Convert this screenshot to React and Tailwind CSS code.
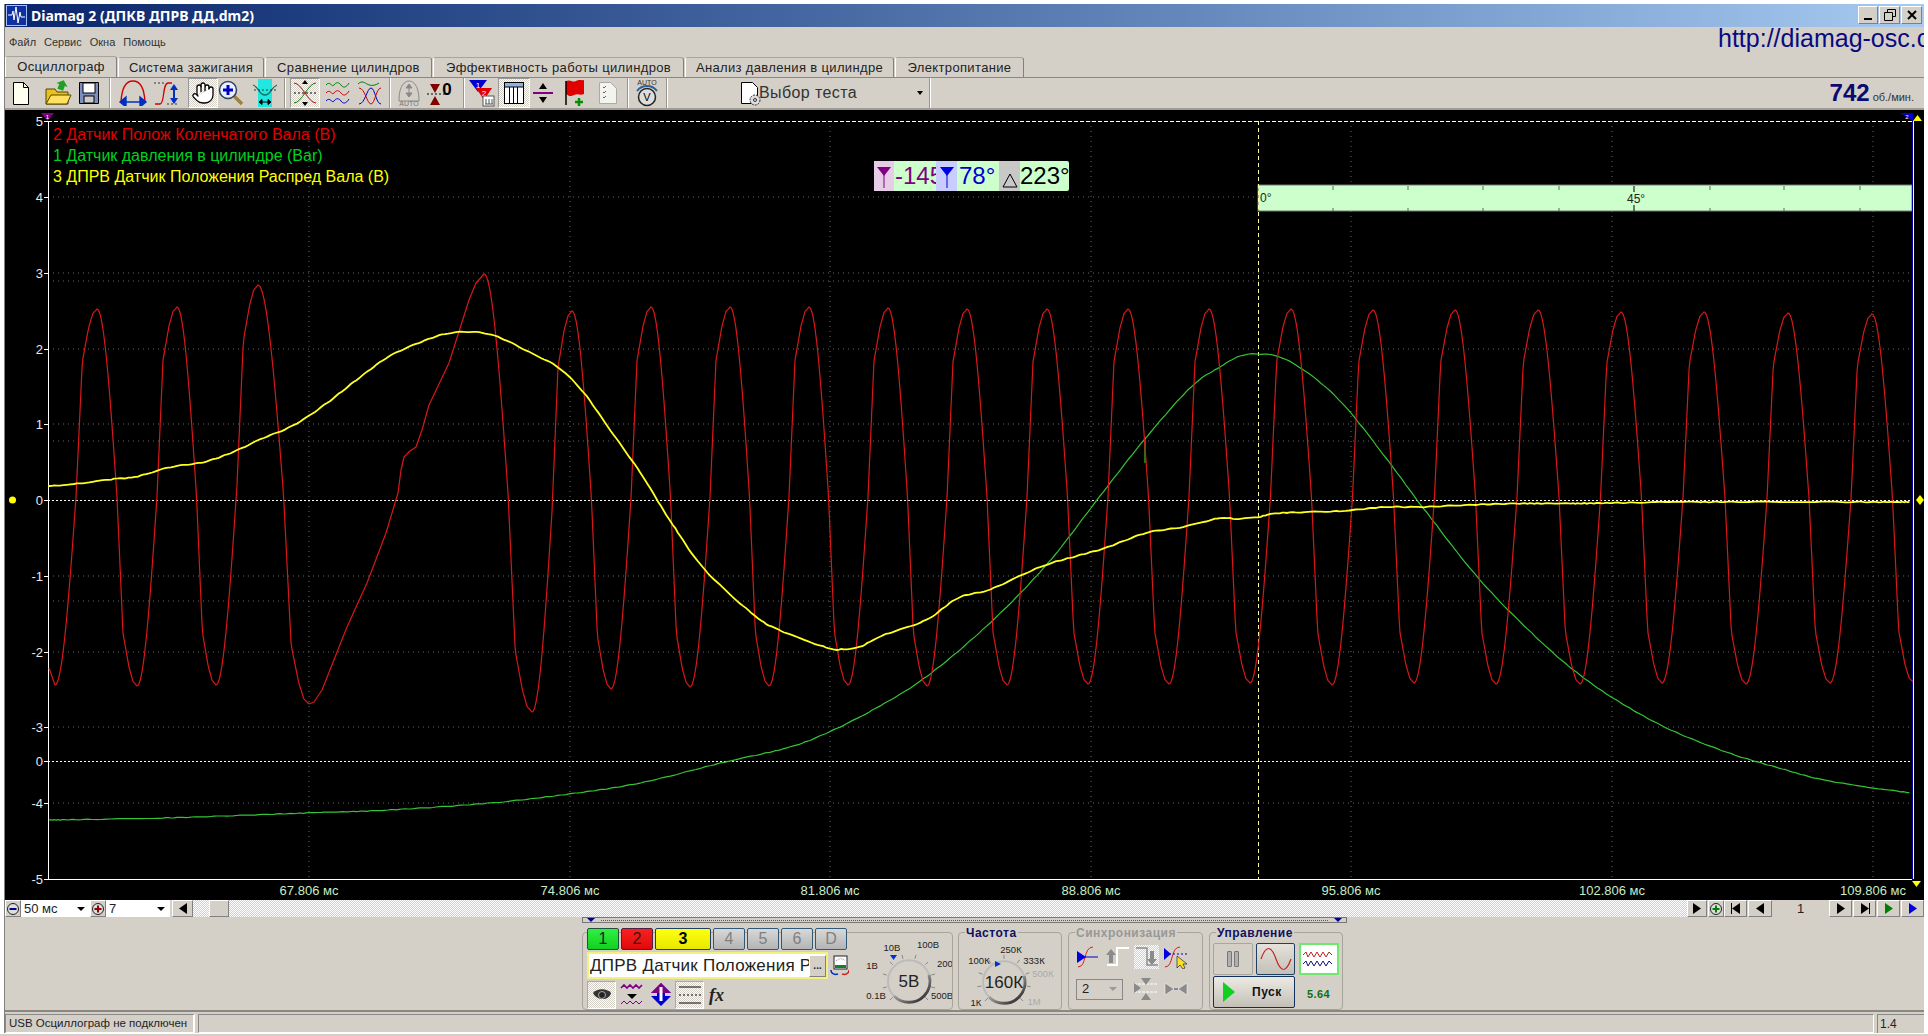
import React from "react";
import { Hand } from "lucide-react";

const face = "bg-[#d4d0c8]";
const raised = "border border-t-white border-l-white border-r-[#808080] border-b-[#808080]";
const dither = "bg-[repeating-conic-gradient(#ffffff_0_25%,#d4d0c8_0_50%)] bg-[length:2px_2px]";

// extremes of the crank sensor trace, read off the screen (x, y)
const redExtremes = [
  [55, 685], [97, 309], [137, 686], [177, 307], [216, 685], [258, 285], [309, 704],
];
const redExtremes2 = [
  [484, 274], [532, 712], [572, 311], [611, 689], [651, 307], [690, 687], [730, 307], [769, 686],
  [809, 307], [848, 685], [888, 308], [927, 686], [967, 309], [1007, 685], [1047, 309], [1088, 684],
  [1128, 309], [1169, 684], [1209, 309], [1250, 683], [1291, 309], [1332, 685], [1373, 310], [1414, 683],
  [1455, 310], [1496, 684], [1538, 310], [1580, 684], [1621, 312], [1662, 683], [1704, 312], [1746, 684],
  [1788, 313], [1830, 683], [1872, 314], [1913, 682],
];
const redBump = [
  [309, 704], [314, 702], [322, 690], [347, 627], [367, 583], [386, 533], [398, 493], [401, 470],
  [404, 457], [410, 451], [416, 447], [422, 430], [429, 405], [449, 363], [469, 300], [476, 283], [484, 274],
];
const yellowPts = [
  [48, 486], [74, 484], [114, 479], [135, 477], [171, 467], [204, 462], [233, 452], [261, 439], [294, 425],
  [327, 403], [359, 378], [388, 357], [416, 344], [445, 334], [473, 332], [498, 337], [531, 353], [559, 368],
  [584, 393], [608, 427], [640, 472], [656, 498], [673, 525], [705, 570], [754, 615], [779, 630], [828, 648],
  [844, 649], [860, 647], [881, 636], [926, 620], [958, 598], [991, 589], [1040, 567], [1073, 557], [1105, 548],
  [1146, 533], [1183, 527], [1220, 518], [1236, 519], [1258, 517], [1280, 513], [1342, 511], [1384, 507],
  [1421, 507], [1467, 505], [1517, 503.5], [1571, 503.5], [1696, 502], [1911, 502],
];
const greenPts = [
  [49, 820], [163, 818], [306, 813], [388, 810], [490, 803], [569, 794], [640, 783], [725, 762], [783, 749],
  [820, 736], [869, 712], [926, 677], [991, 622], [1048, 563], [1097, 500], [1144, 440], [1191, 387], [1220, 367],
  [1240, 356], [1258, 354], [1280, 357], [1305, 371], [1330, 391], [1355, 418], [1392, 466], [1424, 509],
  [1480, 580], [1538, 639], [1580, 675], [1621, 703], [1671, 730], [1729, 753], [1779, 768], [1829, 781], [1911, 793],
];

// half wave: sine first, then the kink every tooth of the sensor shows
const halfWave = (t) => {
  if (t < 0.5) return 0.5 - 0.5 * Math.cos(Math.PI * t);
  const table = [[0.5, 0.5], [0.65, 0.86], [0.8, 0.95], [0.9, 0.988], [1, 1]];
  for (let i = 1; i < table.length; i++) {
    if (t <= table[i][0]) {
      const k = (t - table[i - 1][0]) / (table[i][0] - table[i - 1][0]);
      return table[i - 1][1] + k * (table[i][1] - table[i - 1][1]);
    }
  }
  return 1;
};

const toothPath = (list) => {
  const out = [];
  for (let i = 1; i < list.length; i++) {
    const [x0, y0] = list[i - 1];
    const [x1, y1] = list[i];
    for (let x = x0; x < x1; x += 1) {
      out.push(`${x},${(y0 + (y1 - y0) * halfWave((x - x0) / (x1 - x0))).toFixed(1)}`);
    }
  }
  out.push(list[list.length - 1].join(","));
  return out.join(" ");
};

// catmull-rom through the points, with a little jitter for the noisy channels
const smoothPath = (pts, noise) => {
  const out = [];
  for (let i = 0; i < pts.length - 1; i++) {
    const p0 = pts[Math.max(i - 1, 0)];
    const p1 = pts[i];
    const p2 = pts[i + 1];
    const p3 = pts[Math.min(i + 2, pts.length - 1)];
    const steps = Math.max(2, Math.round((p2[0] - p1[0]) / 3));
    for (let s = 0; s < steps; s++) {
      const t = s / steps;
      const f = (a, b, c, d) =>
        0.5 * (2 * b + (c - a) * t + (2 * a - 5 * b + 4 * c - d) * t * t + (3 * b - a - 3 * c + d) * t * t * t);
      const x = f(p0[0], p1[0], p2[0], p3[0]);
      const y = f(p0[1], p1[1], p2[1], p3[1]) + Math.sin(x * 1.7) * noise;
      out.push(`${x.toFixed(1)},${y.toFixed(1)}`);
    }
  }
  return out.join(" ");
};

const yLabels = [
  ["5", 121], ["4", 197], ["3", 273], ["2", 349], ["1", 424], ["0", 500], ["-1", 576], ["-2", 652], ["-3", 727], ["0", 761], ["-4", 803], ["-5", 879],
];
const gridY = [197, 273, 281, 349, 424, 441, 576, 601, 652, 727, 803];
const gridX = [309, 570, 830, 1091, 1351, 1612, 1873];
const timeLabels = ["67.806 мс", "74.806 мс", "81.806 мс", "88.806 мс", "95.806 мс", "102.806 мс", "109.806 мс"];
const bandTicks = [1333, 1408, 1483, 1559, 1710, 1784, 1860];

const Chart = () => (
  <div className="relative h-[790px] w-full bg-black">
    <svg className="block" width="1919" height="790" viewBox="5 110 1919 790" fontFamily="Liberation Sans, Arial, sans-serif">
      {gridY.map((y) => (
        <line key={y} x1="48" x2="1912" y1={y} y2={y} stroke="#666" strokeDasharray="1 4" />
      ))}
      {gridX.map((x) => (
        <line key={x} x1={x} x2={x} y1="121" y2="879" stroke="#666" strokeDasharray="1 4" />
      ))}
      <rect x="1258" y="185" width="654" height="26" fill="#ccffcc" stroke="#777" />
      {bandTicks.map((x) => (
        <g key={x} stroke="#666">
          <line x1={x} x2={x} y1="186" y2="190" />
          <line x1={x} x2={x} y1="208" y2="211" />
        </g>
      ))}
      <line x1="1634" x2="1634" y1="186" y2="192" stroke="#000" />
      <line x1="1634" x2="1634" y1="205" y2="211" stroke="#000" />
      <text x="1260" y="202" fontSize="12" fill="#222">0°</text>
      <text x="1627" y="203" fontSize="12" fill="#222">45°</text>

      <line x1="48" x2="1912" y1="121.5" y2="121.5" stroke="#fff" strokeDasharray="4 2" />
      <line x1="48" x2="1912" y1="500.5" y2="500.5" stroke="#fff" strokeDasharray="2 2" />
      <line x1="48" x2="1912" y1="761.5" y2="761.5" stroke="#fff" strokeDasharray="2 2" />
      <line x1="1258.5" x2="1258.5" y1="121" y2="879" stroke="#ffffa0" strokeDasharray="4 3" />
      <line x1="48.5" x2="48.5" y1="121" y2="879" stroke="#fff" />
      <line x1="48" x2="1912" y1="879.5" y2="879.5" stroke="#fff" />
      <line x1="1912.5" x2="1912.5" y1="121" y2="879" stroke="#0000b0" />
      <line x1="1913.5" x2="1913.5" y1="121" y2="879" stroke="#fff" />

      {yLabels.map(([t, y], i) => (
        <g key={i}>
          <line x1="44" x2="48" y1={y + 0.5} y2={y + 0.5} stroke="#fff" />
          <text x="43" y={y + 5} fontSize="13" fill="#e8e8e8" textAnchor="end">{t}</text>
        </g>
      ))}
      {timeLabels.map((t, i) => (
        <text key={t} x={gridX[i]} y="895" fontSize="13" fill="#c8ecc8" textAnchor="middle">{t}</text>
      ))}

      <polyline points={smoothPath(greenPts, 0.25)} fill="none" stroke="#35c435" strokeWidth="1.2" />
      <line x1="1145" x2="1145" y1="438" y2="463" stroke="#35c435" strokeWidth="1.2" />
      <polyline points={`49,668 ${toothPath(redExtremes)}`} fill="none" stroke="#d81818" strokeWidth="1.2" />
      <polyline points={redBump.map((p) => p.join(",")).join(" ")} fill="none" stroke="#d81818" strokeWidth="1.2" strokeLinejoin="round" />
      <polyline points={toothPath(redExtremes2)} fill="none" stroke="#d81818" strokeWidth="1.2" />
      <polyline points={smoothPath(yellowPts, 0.35)} fill="none" stroke="#ffff20" strokeWidth="1.8" />

      <path d="M41 113h13l-6.5 8z" fill="#800080" />
      <text x="47.5" y="119" fontSize="6" fill="#fff" textAnchor="middle">1</text>
      <path d="M1900 113h13v8z" fill="#0000d0" />
      <text x="1907" y="119" fontSize="6" fill="#fff" textAnchor="middle">2</text>
      <path d="M1913 121l4.5-6 4.5 6z" fill="#ffff00" />
      <path d="M1912 881h9l-4.5 6z" fill="#ffff00" />
      <circle cx="12.5" cy="500" r="3.5" fill="#ffff00" />
      <path d="M1920 495l4 5-4 5-4-5z" fill="#ffff00" />
    </svg>

    <div className="absolute left-[48px] top-[15px] flex flex-col gap-[1px] font-['Liberation_Sans',Arial,sans-serif] text-[16px] leading-[20px]">
      <span className="text-[#e00000]">2 Датчик Полож Коленчатого Вала (В)</span>
      <span className="text-[#00d020]">1 Датчик давления в цилиндре (Bar)</span>
      <span className="text-[#ffff00]">3 ДПРВ Датчик Положения Распред Вала (В)</span>
    </div>

    <div className="absolute left-[869px] top-[51px] flex h-[30px] font-['Liberation_Sans',Arial,sans-serif] text-[24px] leading-[30px]">
      <div className="flex w-[20px] items-center justify-center bg-[#e6cce6]">
        <svg width="16" height="24"><path d="M1 3h14L8 12z" fill="#800080" /><path d="M8 10v14" stroke="#800080" /></svg>
      </div>
      <div className="w-[42px] overflow-hidden whitespace-nowrap bg-[#ccffcc] pl-[1px] text-[#800080]">-145°</div>
      <div className="flex w-[21px] items-center justify-center bg-[#c8ccff]">
        <svg width="16" height="24"><path d="M1 3h14L8 12z" fill="#0000e0" /><path d="M8 10v14" stroke="#0000e0" /></svg>
      </div>
      <div className="w-[42px] bg-[#ccffcc] pl-[2px] text-[#0000d0]">78°</div>
      <div className="flex w-[21px] items-end justify-center bg-[#c8c8c8] pb-[3px]">
        <svg width="16" height="16"><path d="M8 2L15 15H1z" fill="none" stroke="#000" /></svg>
      </div>
      <div className="w-[49px] rounded-r-[2px] bg-[#ccffcc] text-black">223°</div>
    </div>
  </div>
);

const Tab = ({ w, active, children }) => (
  <div
    className={`flex items-center justify-center rounded-t-[3px] border border-b-0 border-l-white border-t-[#a8a49c] border-r-[#808080] text-[13px] tracking-[0.35px] text-[#222] ${w} ${
      active ? "-mt-[1px] h-[21px]" : "mt-0 h-[20px]"
    }`}
  >
    {children}
  </div>
);

const Sep = ({ cls }) => <div className={`h-[30px] w-[2px] border-l border-r border-l-[#9a968e] border-r-white ${cls}`} />;

const Tool = ({ cls, pressed, children }) => (
  <div className={`flex h-[30px] items-center justify-center ${cls} ${pressed ? `${dither} border border-b-white border-r-white border-l-[#999] border-t-[#999]` : ""}`}>
    {children}
  </div>
);

const Toolbar = () => (
  <div className="flex h-[33px] items-center border-b-2 border-t border-b-[#a09c94] border-t-[#8c8880] pl-[5px]">
    <Tool cls="w-[22px]"><svg width="18" height="25"><path d="M1.5 1.5h10l5 5v17h-15z" fill="#fffff0" stroke="#000" /><path d="M11.5 1.5v5h5" fill="none" stroke="#000" /></svg></Tool>
    <Tool cls="ml-[11px] w-[30px]"><svg width="28" height="26"><path d="M2 9h9l2 3h11v12H2z" fill="#e8c020" stroke="#554400" /><path d="M2 24l5-9h20l-4 9z" fill="#ffe060" stroke="#554400" /><path d="M15 10V5h-3l6-5 6 5h-3v5z" fill="#20a020" transform="rotate(20 18 5)" /></svg></Tool>
    <Tool cls="ml-[3px] w-[26px]"><svg width="22" height="24"><path d="M1.5 1.5h19v21h-19z" fill="#7c90c0" stroke="#000" /><rect x="5" y="2" width="12" height="10" fill="#fff" stroke="#000" /><rect x="6" y="15" width="10" height="7" fill="#ccc" stroke="#000" /></svg></Tool>
    <Sep cls="ml-[7px]" />
    <Tool cls="ml-[3px] w-[38px]"><svg width="30" height="26"><path d="M3 22C4 4 10 1 15 1s11 3 12 21" fill="none" stroke="#d00000" strokeWidth="1.4" /><path d="M2 22h26M2 22l6-5v10zM28 22l-6-5v10z" fill="#0030c0" stroke="#0030c0" strokeWidth="1.4" /></svg></Tool>
    <Tool cls="ml-[0px] w-[30px]"><svg width="28" height="26"><path d="M2 24h5c5 0 2-20 8-21h4" fill="none" stroke="#d00000" strokeWidth="1.3" /><path d="M1 3h12M14 24h12" stroke="#333" strokeDasharray="2 2" /><path d="M21 4l-4 6h3v8h-3l4 6 4-6h-3v-8h3z" fill="#0030c0" /></svg></Tool>
    <Tool cls="ml-[6px] w-[30px]" pressed><Hand size={24} strokeWidth={1.3} color="#000" fill="#fff" /></Tool>
    <Tool cls="ml-[0px] w-[26px]"><svg width="26" height="26"><path d="M15 15l9 9" stroke="#a08040" strokeWidth="3.5" /><circle cx="10" cy="10" r="8.5" fill="#e8f0ff" stroke="#304060" strokeWidth="1.5" /><path d="M10 5v10M5 10h10" stroke="#0000c0" strokeWidth="3" /></svg></Tool>
    <Tool cls="ml-[8px] w-[26px]"><svg width="26" height="28"><rect x="6" y="0" width="14" height="28" fill="#20e8e0" /><path d="M1 6c6 2 6 10 12 10s6-8 12-10" fill="none" stroke="#107060" strokeWidth="1.3" /><path d="M2 11h22" stroke="#333" strokeDasharray="2 2" /><path d="M7 23h12M7 23l3-2.5v5zM19 23l-3-2.5v5z" stroke="#000" fill="#000" /></svg></Tool>
    <Sep cls="ml-[6px]" />
    <Tool cls="ml-[4px] w-[30px]" pressed><svg width="26" height="26"><path d="M2 3c8 0 14 20 22 20" fill="none" stroke="#d00000" /><path d="M2 23c8 0 14-20 22-20" fill="none" stroke="#008000" /><path d="M2 13h22" stroke="#000" strokeDasharray="2 2" /><path d="M13 0l-3 4h6zM13 26l-3-4h6z" fill="#000" /></svg></Tool>
    <Tool cls="ml-[4px] w-[28px]"><svg width="26" height="26"><path d="M1 5c4-5 6 3 8 0s5-3 7 0 5 3 8-2" fill="none" stroke="#008000" /><path d="M1 13c4-5 6 3 8 0s5-3 7 0 5 3 8-2" fill="none" stroke="#d00000" /><path d="M1 21c4-5 6 3 8 0s5-3 7 0 5 3 8-2" fill="none" stroke="#0000c0" /></svg></Tool>
    <Tool cls="ml-[4px] w-[28px]"><svg width="26" height="26"><path d="M1 4c4-4 7-1 9 0s6 3 12-1" fill="none" stroke="#008000" /><path d="M2 24c6 0 8-16 12-16s5 16 10 16" fill="none" stroke="#0000c0" /><path d="M2 8c6 0 8 16 12 16s5-16 10-16" fill="none" stroke="#d00000" /></svg></Tool>
    <Sep cls="ml-[5px]" />
    <Tool cls="ml-[4px] w-[28px]"><svg width="26" height="28"><path d="M3 22C3 6 9 2 13 2s10 4 10 20z" fill="none" stroke="#888" /><path d="M13 5l-3 4h6zM13 18l-3-4h6zM13 9v5" fill="#888" stroke="#888" /><text x="13" y="27" fontSize="7" textAnchor="middle" fill="#777" fontFamily="Liberation Sans">AUTO</text></svg></Tool>
    <Tool cls="ml-[1px] w-[30px]"><svg width="28" height="26"><path d="M2 14h18" stroke="#000" strokeDasharray="2 2" /><path d="M5 4l5 9 5-9zM5 25l5-9 5 9z" fill="#800000" transform="translate(0 0)" /><text x="22" y="15" fontSize="17" fontWeight="bold" textAnchor="middle" fill="#000" fontFamily="Liberation Sans">0</text></svg></Tool>
    <Sep cls="ml-[9px]" />
    <Tool cls="ml-[2px] w-[30px]"><svg width="28" height="28"><path d="M1 1h18L10 13z" fill="#0000d0" /><text x="10" y="9" fontSize="8" fill="#fff" textAnchor="middle" fontFamily="Liberation Sans">1</text><path d="M8 9h16L16 21z" fill="#e00000" /><text x="16" y="17" fontSize="8" fill="#fff" textAnchor="middle" fontFamily="Liberation Sans">2</text><rect x="15" y="17" width="11" height="10" fill="#fff" stroke="#555" /><path d="M18 20v5M21 20v5M24 20v5M17 25h8" stroke="#555" /></svg></Tool>
    <Tool cls="ml-[1px] w-[32px]" pressed><svg width="24" height="24"><rect x="2.5" y="1.5" width="19" height="21" fill="#fff" stroke="#000" /><rect x="3" y="2" width="18" height="4" fill="#90b0e0" /><path d="M7.5 6v16M11.5 6v16M15.5 6v16M3 6h18" stroke="#000" /></svg></Tool>
    <Tool cls="ml-[0px] w-[26px]"><svg width="22" height="24"><path d="M11 2l-4 6h8zM11 22l-4-6h8z" fill="#000" /><path d="M1 12h20" stroke="#800080" strokeWidth="2" /></svg></Tool>
    <Tool cls="ml-[6px] w-[26px]"><svg width="24" height="28"><path d="M3 2c5-2 6 2 10 0s5 0 8-1v14c-4 2-6-1-10 1s-5 1-8-1z" fill="#e00000" /><path d="M3 2v24" stroke="#000" strokeWidth="1.5" /><path d="M16 19v8M12 23h8" stroke="#009000" strokeWidth="2.5" /></svg></Tool>
    <Tool cls="ml-[7px] w-[26px]"><svg width="20" height="24"><path d="M1.5 1.5h11l6 6v15h-17z" fill="#f4f4ee" stroke="#aaa" /><path d="M5 6l1 1 2-2M5 11l1 1 2-2M5 16l1 1 2-2" fill="none" stroke="#666" /></svg></Tool>
    <Sep cls="ml-[6px]" />
    <Tool cls="ml-[3px] w-[30px]"><svg width="26" height="28"><text x="13" y="6" fontSize="7" textAnchor="middle" fill="#333" fontFamily="Liberation Sans">AUTO</text><path d="M3 12c3-4 7-5 10-5s7 1 10 5" fill="none" stroke="#3060a0" strokeWidth="2" /><circle cx="13" cy="18" r="8.5" fill="#ddd" stroke="#222" strokeWidth="1.5" /><text x="13" y="22" fontSize="11" textAnchor="middle" fill="#000" fontFamily="Liberation Sans">V</text></svg></Tool>
    <Sep cls="ml-[4px]" />
    <div className="ml-[72px] flex w-[188px] items-center">
      <svg width="24" height="26"><path d="M1.5 2.5h11l5 5v16h-16z" fill="#fff" stroke="#000" /><circle cx="15" cy="20" r="5" fill="#ddd" stroke="#333" strokeDasharray="2 1" /><circle cx="15" cy="20" r="1.5" fill="none" stroke="#333" /></svg>
      <span className="ml-[-6px] pl-[1px] font-['Liberation_Sans',Arial,sans-serif] text-[16px] tracking-[0.4px] text-[#333]">Выбор теста</span>
      <span className="ml-auto mr-[5px] h-0 w-0 border-x-[3.5px] border-t-[4px] border-x-transparent border-t-black" />
    </div>
    <Sep cls="ml-[1px]" />
    <div className="ml-auto flex items-baseline pr-[10px] font-['Liberation_Sans',Arial,sans-serif]">
      <span className="text-[24px] font-bold leading-none text-[#0a0a70]">742</span>
      <span className="ml-[3px] text-[11px] text-[#333]">об./мин.</span>
    </div>
  </div>
);

const Tri = ({ dir = "r", color = "#000", bar }) => (
  <svg width="12" height="11">
    {dir === "r" ? <path d="M2 0l8 5.5-8 5.5z" fill={color} /> : <path d="M10 0L2 5.5l8 5.5z" fill={color} />}
    {bar && <path d={dir === "r" ? "M10.5 0v11" : "M1.5 0v11"} stroke={color} />}
  </svg>
);

const NavBtn = ({ w, children }) => (
  <div className={`flex h-[17px] items-center justify-center ${face} ${raised} ${w}`}>{children}</div>
);

const RoundBtn = ({ mark }) => (
  <div className={`flex h-[17px] w-[16px] items-center justify-center ${face} ${raised}`}>
    <svg width="14" height="14">
      <circle cx="7" cy="7" r="5.5" fill="#ddd" stroke="#222" />
      {mark === "minus" && <path d="M3.5 7h7" stroke="#000080" strokeWidth="2" />}
      {mark === "plus" && <path d="M3.5 7h7M7 3.5v7" stroke="#900000" strokeWidth="2" />}
      {mark === "green" && <path d="M3.5 7h7M7 3.5v7" stroke="#008000" strokeWidth="2" />}
    </svg>
  </div>
);

const ScrollRow = () => (
  <div className="flex h-[17px] items-stretch text-[13px]">
    <RoundBtn mark="minus" />
    <div className="flex w-[69px] items-center bg-white pl-[3px] pr-[5px]">
      <span>50 мс</span>
      <span className="ml-auto h-0 w-0 border-x-[4px] border-t-[4px] border-x-transparent border-t-black" />
    </div>
    <RoundBtn mark="plus" />
    <div className="flex w-[64px] items-center bg-white pl-[3px] pr-[5px]">
      <span>7</span>
      <span className="ml-auto h-0 w-0 border-x-[4px] border-t-[4px] border-x-transparent border-t-black" />
    </div>
    <div className="w-[2px]" />
    <NavBtn w="w-[21px]"><Tri dir="l" /></NavBtn>
    <div className={`w-[16px] ${dither}`} />
    <div className={`w-[20px] ${face} ${raised}`} />
    <div className={`flex-1 ${dither}`} />
    <NavBtn w="w-[20px]"><Tri /></NavBtn>
    <div className="w-[1px]" />
    <RoundBtn mark="green" />
    <NavBtn w="w-[23px]"><Tri dir="l" bar /></NavBtn>
    <div className="w-[1px]" />
    <NavBtn w="w-[24px]"><Tri dir="l" /></NavBtn>
    <div className="flex w-[57px] items-center justify-center text-[13px] text-[#222]">1</div>
    <NavBtn w="w-[23px]"><Tri /></NavBtn>
    <div className="w-[1px]" />
    <NavBtn w="w-[23px]"><Tri bar /></NavBtn>
    <div className="w-[1px]" />
    <NavBtn w="w-[23px]"><Tri color="#008000" /></NavBtn>
    <div className="w-[1px]" />
    <NavBtn w="w-[23px]"><Tri color="#0000e0" /></NavBtn>
  </div>
);

const chanBase = "flex h-[22px] items-center justify-center rounded-[2px] border text-[16px]";

const ChannelButtons = () => (
  <div className="flex gap-[2px]">
    <div className={`${chanBase} w-[32px] border-[#205040] bg-gradient-to-b from-[#30f040] to-[#10d020] text-[#222]`}>1</div>
    <div className={`${chanBase} w-[32px] border-[#502040] bg-gradient-to-b from-[#f82020] to-[#e00808] text-[#401010]`}>2</div>
    <div className={`${chanBase} w-[56px] border-[#204060] bg-gradient-to-b from-[#ffff10] to-[#e8e800] font-bold text-black`}>3</div>
    {["4", "5", "6", "D"].map((c) => (
      <div key={c} className={`${chanBase} w-[32px] border-[#305878] bg-gradient-to-b from-[#d8d8d8] to-[#b4b4b4] text-[#808080]`}>{c}</div>
    ))}
  </div>
);

const IconCell = ({ pressed, children }) => (
  <div className={`flex h-[28px] w-[29px] items-center justify-center ${pressed ? `${dither} border border-b-white border-r-white border-l-[#aaa] border-t-[#aaa]` : ""}`}>
    {children}
  </div>
);

const Knob = ({ w, cx, cy, labels, value, ticks, marker }) => (
  <svg width={w} height="80" fontFamily="Liberation Sans, Arial, sans-serif">
    <defs>
      <linearGradient id={`ring${cx}`} x1="0" x2="1" y1="0" y2="1">
        <stop offset="0" stopColor="#f4f4f4" />
        <stop offset="0.5" stopColor="#888" />
        <stop offset="1" stopColor="#111" />
      </linearGradient>
    </defs>
    {ticks.map((a) => {
      const r = (a * Math.PI) / 180;
      return (
        <line key={a} x1={cx + Math.cos(r) * 23} y1={cy + Math.sin(r) * 23} x2={cx + Math.cos(r) * 27} y2={cy + Math.sin(r) * 27} stroke="#888" />
      );
    })}
    <path d={`M${cx - 15} ${cy + 15}A21 21 0 1 1 ${cx + 15} ${cy + 15}`} fill="none" stroke="#bbb" strokeWidth="2" />
    <path d={`M${cx - 15} ${cy + 15}A21 21 0 0 0 ${cx + 15} ${cy + 15}A21 21 0 0 0 ${cx + 20} ${cy - 6}`} fill="none" stroke={`url(#ring${cx})`} strokeWidth="3" />
    <path d={marker} fill="#0030d0" />
    {labels.map(([t, x, y, c]) => (
      <text key={t} x={x} y={y} fontSize="9.5" textAnchor="middle" fill={c || "#222"}>{t}</text>
    ))}
    <text x={cx} y={cy + 6} fontSize="17" textAnchor="middle" fill="#222">{value}</text>
  </svg>
);

const voltTicks = [135, 165, 195, 225, 255, 285, 315, 345, 15, 45];
const freqTicks = [135, 170, 200, 235, 270, 305, 340, 10, 45];

const GroupTitle = ({ color, children }) => (
  <span className={`absolute -top-[7px] left-[6px] bg-[#d4d0c8] px-[1px] font-['Liberation_Sans',Arial,sans-serif] text-[12px] font-bold leading-[14px] tracking-[0.5px] ${color}`}>{children}</span>
);

const frame = "relative h-[78px] rounded-[4px] border border-[#a8a49c]";

const BottomPanel = () => (
  <div className="h-[95px] border-b-2 border-b-[#8c8880] pl-[577px]">
    <div className="flex h-[6px] w-[765px] items-center justify-between border border-[#777] px-[4px]">
      <span className="h-0 w-0 border-x-[4px] border-t-[4px] border-x-transparent border-t-[#000080]" />
      <span className="mx-[6px] h-0 flex-1 border-t border-dotted border-[#555]" />
      <span className="h-0 w-0 border-x-[4px] border-t-[4px] border-x-transparent border-t-[#000080]" />
    </div>
    <div className="mt-[9px] flex">
      <div className={`${frame} flex w-[371px]`}>
        <div className="-mt-[5px] ml-[4px] flex w-[262px] flex-col">
          <ChannelButtons />
          <div className="mt-[2px] flex items-center">
            <div className="flex h-[27px] w-[241px] items-center border-2 border-[#f4f080] bg-white pl-[1px]">
              <span className="w-[220px] overflow-hidden whitespace-nowrap font-['Liberation_Sans',Arial,sans-serif] text-[17px] tracking-[0.25px] text-[#222]">ДПРВ Датчик Положения Распред Вала</span>
              <div className={`flex h-[22px] w-[17px] items-center justify-center text-[10px] font-bold leading-none ${face} ${raised}`}>...</div>
            </div>
            <svg className="ml-[2px]" width="20" height="22"><rect x="4" y="1" width="13" height="13" fill="#fff" stroke="#222" /><path d="M6 6c3-3 7-3 9 0" fill="none" stroke="#888" strokeDasharray="1 1" /><rect x="5" y="10" width="11" height="3" fill="#108030" /><path d="M1 15c0 4 4 5 7 4" fill="none" stroke="#0030c0" strokeWidth="1.5" /><path d="M19 15c0 4-4 5-7 4" fill="none" stroke="#d02020" strokeWidth="1.5" /></svg>
          </div>
          <div className="mt-[2px] flex items-center">
            <IconCell pressed><svg width="20" height="14"><path d="M1 5c4-5 14-5 18 0-2 8-14 8-18 0z" fill="#333" /><circle cx="10" cy="7" r="3.5" fill="#222" stroke="#aaa" /></svg></IconCell>
            <div className="ml-[4px]"><svg width="24" height="24"><path d="M1 5l3-3 3 3 3-3 3 3 3-3 3 3 3-3" fill="none" stroke="#800080" strokeWidth="1.6" /><path d="M7 11h10l-5 5z" fill="#000" /><path d="M1 21l3-3 3 3 3-3 3 3 3-3 3 3 3-3" fill="none" stroke="#800080" /></svg></div>
            <div className="ml-[6px]"><svg width="22" height="26"><path d="M11 1L1 11h6v3H1l10 10 10-10h-6v-3h6z" fill="#0000d0" /><path d="M11 1L1 11h20z" fill="#800080" /><rect x="9.5" y="5" width="3" height="14" fill="#fff" /></svg></div>
            <div className="ml-[3px]"><IconCell pressed><svg width="24" height="22"><path d="M1 3h22M1 19h22" stroke="#000" /><path d="M1 11h22" stroke="#000" strokeDasharray="2 2" /></svg></IconCell></div>
            <span className="ml-[5px] font-['Liberation_Serif',serif] text-[18px] font-bold italic leading-none">fx</span>
          </div>
        </div>
        <div className="-mt-[4px] ml-[9px]">
          <Knob w={94} cx={51} cy={52} value="5В" ticks={voltTicks} marker="M32 26h7l-3.500 5z" labels={[["10В", 34, 22], ["100В", 70, 19], ["1В", 14, 40], ["200В", 90, 38], ["0.1В", 18, 70], ["500В", 84, 70]]} />
        </div>
      </div>
      <div className={`${frame} ml-[5px] w-[104px]`}>
        <GroupTitle color="text-[#101060]">Частота</GroupTitle>
        <div className="ml-[0px] mt-[3px]">
          <Knob w={102} cx={45} cy={46} value="160К" ticks={freqTicks} marker="M36 25l6 3-6 3z" labels={[["100К", 20, 28], ["250К", 52, 17], ["333К", 75, 28], ["500К", 84, 41, "#aaa"], ["1К", 17, 70], ["1М", 75, 69, "#aaa"]]} />
        </div>
      </div>
      <div className={`${frame} ml-[6px] w-[135px]`}>
        <GroupTitle color="text-[#989898]">Синхронизация</GroupTitle>
        <div className="flex flex-col pl-[7px] pt-[11px]">
          <div className="flex h-[26px] items-center">
            <svg width="24" height="24"><path d="M2 22c9 0 5-20 15-20" fill="none" stroke="#d82020" /><path d="M2 12h20" stroke="#0000c0" /><path d="M1 6l9 6-9 6z" fill="#0000e0" /></svg>
            <svg className="ml-[6px]" width="24" height="24"><path d="M1 20h10V3h12" fill="none" stroke="#fff" strokeWidth="2" /><path d="M5 4l-5 6h3v8h4v-8h3z" fill="#8a8a8a" /></svg>
            <div className={`ml-[4px] flex h-[24px] w-[25px] items-center justify-center ${dither}`}>
              <svg width="24" height="24"><path d="M1 3h11v17h11" fill="none" stroke="#8a8a8a" strokeWidth="1.4" /><path d="M17 20l-5-6h3V6h4v8h3z" fill="#8a8a8a" /></svg>
            </div>
            <svg className="ml-[4px]" width="26" height="24"><path d="M2 22c9 0 5-20 15-20" fill="none" stroke="#d82020" /><path d="M2 9h22" stroke="#0000c0" strokeDasharray="2 2" /><path d="M1 3l7 6-7 6z" fill="#0000e0" /><path d="M14 11v12l3-3 3 4 2-1-2-4h4z" fill="#ffe020" stroke="#222" strokeWidth="0.7" /></svg>
          </div>
          <div className="mt-[8px] flex h-[22px] items-center">
            <div className="flex h-[21px] w-[47px] items-center justify-between border border-[#888] px-[5px] font-['Liberation_Sans',Arial,sans-serif] text-[13px] text-[#222]">
              <span>2</span>
              <span className="h-0 w-0 border-x-[4px] border-t-[4px] border-x-transparent border-t-[#999]" />
            </div>
            <svg className="ml-[11px]" width="24" height="22"><path d="M0 6h24M0 14h24" stroke="#fff" strokeDasharray="3 1" /><path d="M7 0h10l-5 7zM7 22h10l-5-7zM0 5l7 5-7 5z" fill="#8a8a8a" /></svg>
            <svg className="ml-[6px]" width="24" height="22"><path d="M1 5l9 6-9 6zM23 5l-9 6 9 6z" fill="#8a8a8a" stroke="#fff" strokeWidth="0.5" /><path d="M10 11h4" stroke="#8a8a8a" strokeWidth="2" /></svg>
          </div>
        </div>
      </div>
      <div className={`${frame} ml-[6px] w-[134px]`}>
        <GroupTitle color="text-[#101060]">Управление</GroupTitle>
        <div className="flex pl-[3px] pt-[10px]">
          <div className="flex w-[82px] flex-col gap-[1px]">
            <div className="flex gap-[3px]">
              <div className="flex h-[32px] w-[40px] items-center justify-center gap-[2px] rounded-[2px] border border-[#aaa69e]">
                <span className="h-[16px] w-[5px] rounded-[1px] border border-[#777] bg-[#b0b0b0]" />
                <span className="h-[16px] w-[5px] rounded-[1px] border border-[#777] bg-[#b0b0b0]" />
              </div>
              <div className="flex h-[32px] w-[39px] items-center justify-center rounded-[2px] border border-[#204060] bg-gradient-to-b from-[#e4e2dc] to-[#c4c0b8]">
                <svg width="32" height="24"><path d="M1 12c5-14 10-14 15 0s10 14 15 0" fill="none" stroke="#c82020" strokeWidth="1.2" /></svg>
              </div>
            </div>
            <div className="flex h-[32px] items-center rounded-[2px] border border-[#103060] bg-gradient-to-b from-[#eceae4] to-[#c4c0b8]">
              <svg className="ml-[8px]" width="14" height="22"><path d="M1 1l12 10L1 21z" fill="#10d020" /></svg>
              <span className="ml-[16px] font-['Liberation_Sans',Arial,sans-serif] text-[12px] font-bold tracking-[0.5px] text-[#111]">Пуск</span>
            </div>
          </div>
          <div className="ml-[3px] flex w-[41px] flex-col items-center">
            <div className="flex h-[32px] w-[40px] items-center justify-center border-2 border-[#70e870] bg-white">
              <svg width="34" height="24"><path d="M1 8l3-3 2 5 3-5 3 5 3-5 3 5 3-5 3 5 3-5 3 3" fill="none" stroke="#c02020" /><path d="M1 17l3-3 2 5 3-5 3 5 3-5 3 5 3-5 3 5 3-5 3 3" fill="none" stroke="#101080" /></svg>
            </div>
            <span className="mt-[14px] font-['Liberation_Sans',Arial,sans-serif] text-[11px] font-bold leading-none tracking-[0.4px] text-[#107010]">5.64</span>
          </div>
        </div>
      </div>
    </div>
  </div>
);

const StatusBar = () => (
  <div className="flex h-[21px] items-stretch gap-[3px] pt-[2px] font-['Liberation_Sans',Arial,sans-serif] text-[11.5px] text-[#222]">
    <div className="flex w-[190px] items-center border-b border-l border-r-2 border-t border-b-white border-l-[#888] border-r-white border-t-[#888] pl-[3px]">USB Осциллограф не подключен</div>
    <div className="flex-1 border-b border-l border-r border-t border-b-white border-l-[#888] border-r-white border-t-[#888]" />
    <div className="flex w-[47px] items-center border-l border-t border-l-[#888] border-t-[#888] pl-[2px] text-[12px]">1.4</div>
  </div>
);

export default function App() {
  return (
    <div className="flex h-[1036px] w-[1928px] flex-col overflow-hidden bg-white pt-[4px]">
      <div className={`relative ml-[4px] h-[1029px] w-[1920px] overflow-hidden border-l border-l-[#808080] ${face} font-['Liberation_Sans',Arial,sans-serif] text-[#222]`}>
        <div className="flex h-[23px] items-center bg-gradient-to-r from-[#0a246a] to-[#a6caf0] pl-[1px] pr-[2px]">
          <svg width="21" height="21"><rect x="0.5" y="0.5" width="20" height="20" fill="#1030a0" stroke="#a0c0ff" /><path d="M2 10h4l1-4 1 9 2-13 2 16 2-11 1 5h4" fill="none" stroke="#fff" /></svg>
          <span className="ml-[4px] font-['Noto_Sans',sans-serif] text-[14px] font-bold text-white">Diamag 2 (ДПКВ ДПРВ ДД.dm2)</span>
          <div className="ml-auto flex gap-[1px] self-start pt-[2px]">
            <div className={`flex h-[18px] w-[20px] items-end justify-center pb-[3px] ${face} ${raised}`}><span className="h-[2px] w-[8px] bg-black" /></div>
            <div className={`flex h-[18px] w-[21px] items-center justify-center ${face} ${raised}`}><svg width="12" height="12"><path d="M3.500 3.500v-3h8v7h-3M.5 3.500h8v8h-8z" fill="none" stroke="#000" /></svg></div>
            <div className={`flex h-[18px] w-[21px] items-center justify-center ${face} ${raised}`}><svg width="12" height="12"><path d="M2 2l8 8M10 2l-8 8" stroke="#000" strokeWidth="2" /></svg></div>
          </div>
        </div>
        <div className="relative flex h-[30px] items-center gap-[8px] pl-[4px] text-[11px] text-[#333]">
          <span>Файл</span>
          <span>Сервис</span>
          <span>Окна</span>
          <span>Помощь</span>
          <span className="absolute -top-[4px] left-[1713px] whitespace-nowrap text-[25px] leading-[30px] text-[#0a0a80]">http://diamag-osc.com</span>
        </div>
        <div className="flex h-[20px] items-end gap-[1px] pl-[0px]">
          <Tab w="w-[112px]" active>Осциллограф</Tab>
          <Tab w="w-[146px]">Система зажигания</Tab>
          <Tab w="w-[167px]">Сравнение цилиндров</Tab>
          <Tab w="w-[251px]">Эффективность работы цилиндров</Tab>
          <Tab w="w-[209px]">Анализ давления в цилиндре</Tab>
          <Tab w="w-[129px]">Электропитание</Tab>
        </div>
        <Toolbar />
        <Chart />
        <ScrollRow />
        <BottomPanel />
        <StatusBar />
      </div>
      <div className="h-[3px] border-t border-t-white bg-[#d4d0c8]" />
    </div>
  );
}
